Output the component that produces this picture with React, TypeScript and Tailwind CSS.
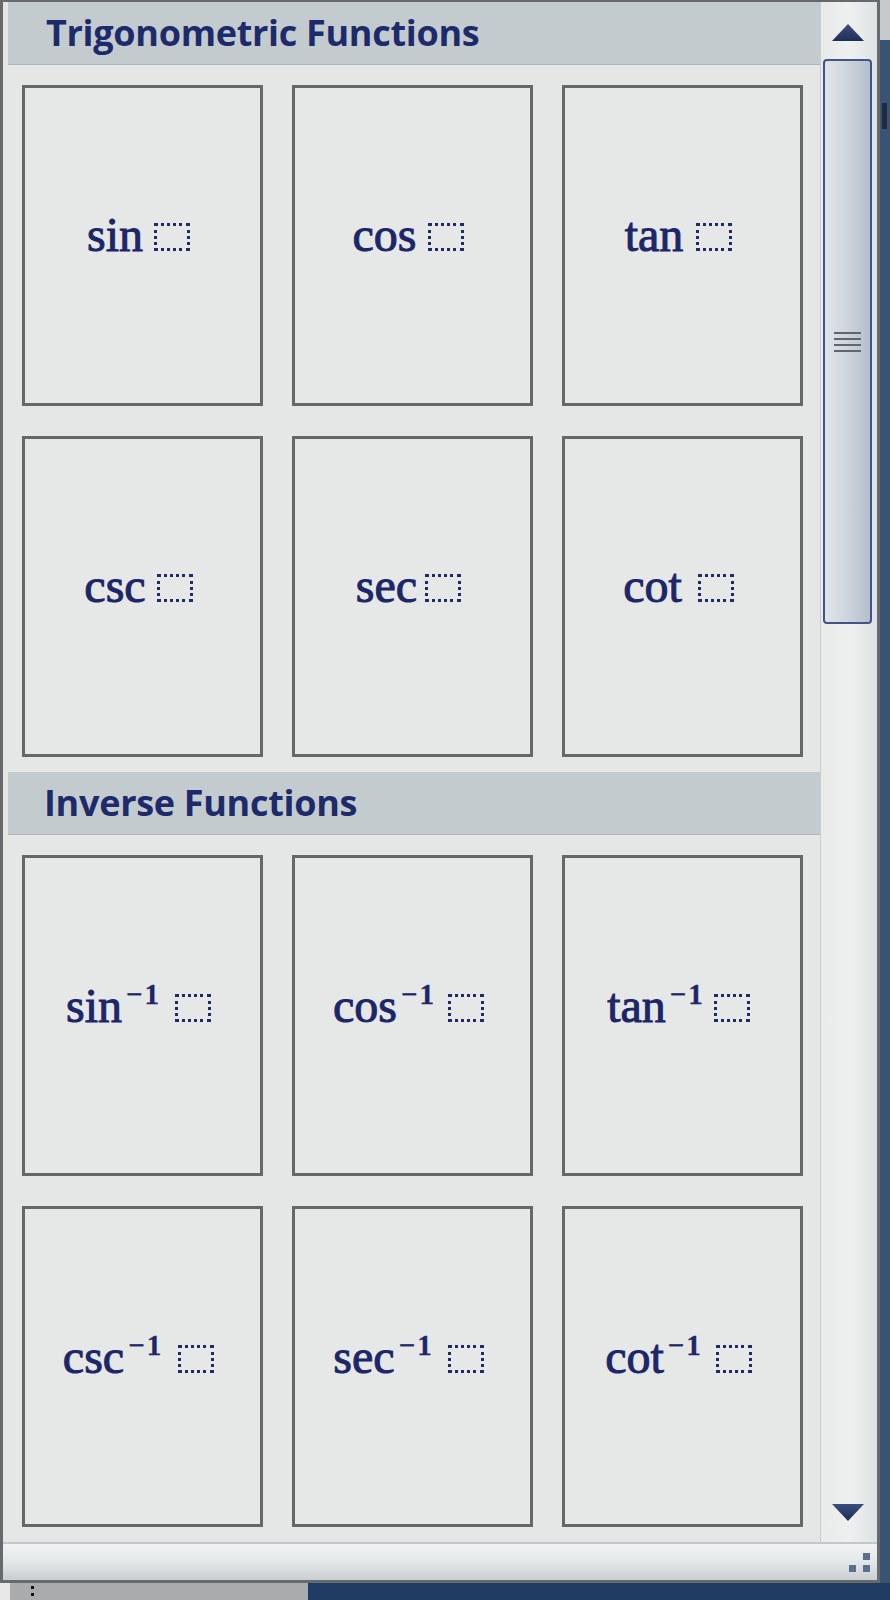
import React from "react";

const NAVY = "text-[#1c2668]";

function Placeholder() {
  return <span className="inline-block w-[36px] h-[28px] border-[3px] border-dotted border-[#1f2a66]" />;
}

type Item = { name: string; inv?: boolean; gap: number };

function Cell({ item }: { item: Item }) {
  return (
    <div className="h-[321px] border-[3px] border-[#666767] bg-[#e6e8e8] flex items-center justify-center pb-[22px] pr-[8px]">
      <div className="flex items-baseline" style={{ gap: item.gap }}>
        <span className={`${NAVY} text-[48px] leading-none [font-family:'Liberation_Serif',serif] [-webkit-text-stroke:1px_#1c2668]`}>
          {item.name}
          {item.inv && (
            <span className="ml-[4px] text-[29px] align-[18px] tracking-[2px] font-bold [-webkit-text-stroke:0.3px_#1c2668]">−1</span>
          )}
        </span>
        <Placeholder />
      </div>
    </div>
  );
}

function Section({ title, items, titlePad }: { title: string; items: Item[]; titlePad: string }) {
  return (
    <div className="flex flex-col">
      <div className={`h-[63px] bg-[#c4cbce] border-b border-[#aeb6ba] flex items-center ${titlePad}`}>
        <span className="text-[#1d2a6b] text-[36px] font-bold leading-none [font-family:'Open_Sans',sans-serif] tracking-[-0.3px]">
          {title}
        </span>
      </div>
      <div className="grid grid-cols-[241px_241px_241px] gap-x-[29px] gap-y-[30px] pl-[14px] pt-[20px] pb-[15px]">
        {items.map((it) => (
          <Cell key={it.name + (it.inv ? "i" : "")} item={it} />
        ))}
      </div>
    </div>
  );
}

function Arrow({ up }: { up?: boolean }) {
  return (
    <svg width="32" height="17" viewBox="0 0 32 17">
      <defs>
        <linearGradient id={up ? "ga" : "gb"} x1="0" y1="0" x2="0" y2="1">
          <stop offset="0" stopColor="#3a4f7e" />
          <stop offset="1" stopColor="#1f2f55" />
        </linearGradient>
      </defs>
      {up ? (
        <polygon points="16,0 32,17 0,17" fill="url(#ga)" />
      ) : (
        <polygon points="0,0 32,0 16,17" fill="url(#gb)" />
      )}
    </svg>
  );
}

export default function App() {
  const trig: Item[] = [
    { name: "sin", gap: 11 },
    { name: "cos", gap: 12 },
    { name: "tan", gap: 13 },
    { name: "csc", gap: 11 },
    { name: "sec", gap: 8 },
    { name: "cot", gap: 16 },
  ];
  const inv: Item[] = [
    { name: "sin", inv: true, gap: 14 },
    { name: "cos", inv: true, gap: 12 },
    { name: "tan", inv: true, gap: 9 },
    { name: "csc", inv: true, gap: 15 },
    { name: "sec", inv: true, gap: 14 },
    { name: "cot", inv: true, gap: 13 },
  ];
  return (
    <div className="relative w-[890px] h-[1600px] overflow-hidden bg-[#3a5273]">
      <div className="absolute right-0 top-0 w-[10px] h-[40px] bg-[#c6cacd]" />
      <div className="absolute right-[3px] top-[103px] w-[5px] h-[26px] bg-[#1f2a3a]" />
      <div className="flex flex-col w-[880px] h-[1583px] bg-[#e5e7e7] border-t-2 border-l-[3px] border-r-[3px] border-b-[3px] border-[#676a6c]">
        <div className="flex flex-1 min-h-0">
          <div className="flex-1 min-w-0 overflow-hidden pl-[5px] flex flex-col">
            <Section title="Trigonometric Functions" items={trig} titlePad="pl-[38px]" />
            <Section title="Inverse Functions" items={inv} titlePad="pl-[36px]" />
          </div>
          <div className="w-[57px] flex flex-col border-l border-[#c9cdcf] bg-gradient-to-r from-[#e9ebeb] via-[#eef0f0] to-[#dfe2e4]">
            <div className="h-[57px] flex items-center justify-center pr-[2px] pt-[4px]">
              <Arrow up />
            </div>
            <div className="ml-[2px] mr-[5px] h-[565px] rounded-[4px] border-2 border-[#43548a] bg-gradient-to-r from-[#e2e5e8] via-[#cdd4db] to-[#b3bfcb] flex flex-col items-center justify-center gap-[4px]">
              <div className="w-[27px] h-[2px] bg-[#5e6670]" />
              <div className="w-[27px] h-[2px] bg-[#5e6670]" />
              <div className="w-[27px] h-[2px] bg-[#5e6670]" />
              <div className="w-[27px] h-[2px] bg-[#5e6670]" />
            </div>
            <div className="flex-1" />
            <div className="h-[56px] flex items-center justify-center pr-[2px] pb-[4px]">
              <Arrow />
            </div>
          </div>
        </div>
        <div className="relative h-[38px] border-t-2 border-[#c2c7ca] bg-gradient-to-b from-[#f1f3f3] via-[#e4e7e8] to-[#c9ced1]">
          <div className="absolute right-[7px] top-[9px] w-[7px] h-[7px] bg-[#5b6f8f]" />
          <div className="absolute right-[7px] top-[21px] w-[7px] h-[7px] bg-[#5b6f8f]" />
          <div className="absolute right-[21px] top-[21px] w-[7px] h-[7px] bg-[#5b6f8f]" />
        </div>
      </div>
      <div className="flex h-[17px]">
        <div className="relative w-[308px] bg-[#a9abad]">
          <div className="absolute left-0 top-0 w-[10px] h-full bg-[#e8e8e8]" />
          <div className="absolute left-[31px] top-[3px] w-[3px] h-[3px] bg-[#111]" />
          <div className="absolute left-[31px] top-[10px] w-[3px] h-[3px] bg-[#111]" />
        </div>
        <div className="flex-1 bg-[#203c63]" />
      </div>
    </div>
  );
}
